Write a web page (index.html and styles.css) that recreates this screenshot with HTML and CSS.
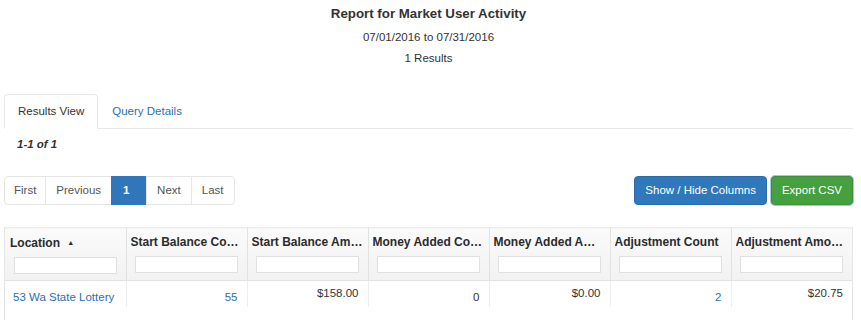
FILE: index.html
```html
<!DOCTYPE html>
<html>
<head>
    <meta name="viewport" content="width=device-width, initial-scale=1.0">
    <title>Report for Market User Activity</title>
    <link rel="stylesheet" href="styles.css">
</head>
<body>
    <div id="container">
        <div class="report-head">
            <h1>Report for Market User Activity</h1>
            <p>07/01/2016 to 07/31/2016</p>
            <p>1 Results</p>
        </div>

        <ul class="tabs">
            <li class="tab active">Results View</li>
            <li class="tab"><a href="#">Query Details</a></li>
        </ul>

        <div class="count">1-1 of 1</div>

        <div class="toolbar">
            <ul class="pager">
                <li>First</li>
                <li>Previous</li>
                <li class="current">1</li>
                <li>Next</li>
                <li>Last</li>
            </ul>
            <div class="actions">
                <button class="btn btn-blue">Show / Hide Columns</button>
                <button class="btn btn-green">Export CSV</button>
            </div>
        </div>

        <div class="grid-wrap">
            <table class="grid">
                <thead>
                    <tr>
                        <th><div class="th-label">Location <span class="sort">&#9650;</span></div><input type="text"></th>
                        <th><div class="th-label">Start Balance Count</div><input type="text"></th>
                        <th><div class="th-label">Start Balance Amount</div><input type="text"></th>
                        <th><div class="th-label">Money Added Count</div><input type="text"></th>
                        <th><div class="th-label">Money Added Amount</div><input type="text"></th>
                        <th><div class="th-label">Adjustment Count</div><input type="text"></th>
                        <th><div class="th-label">Adjustment Amount</div><input type="text"></th>
                    </tr>
                </thead>
                <tbody>
                    <tr>
                        <td><a href="#">53 Wa State Lottery</a></td>
                        <td class="num"><a href="#">55</a></td>
                        <td class="num top">$158.00</td>
                        <td class="num">0</td>
                        <td class="num top">$0.00</td>
                        <td class="num"><a href="#">2</a></td>
                        <td class="num top">$20.75</td>
                    </tr>
                </tbody>
            </table>
        </div>
    </div>
</body>
</html>
```

FILE: styles.css
```css
* {
    box-sizing: border-box;
}
body {
    margin: 0;
    font-family: "Liberation Sans", Arial, sans-serif;
    font-size: 11.5px;
    line-height: 17px;
    color: #333;
    background-color: #fff;
}
a {
    color: #2a6fb5;
    text-decoration: none;
}
#container {
    padding: 4px 8px 0 4px;
}

/* report title block */
.report-head {
    text-align: center;
}
.report-head h1 {
    margin: 0;
    font-size: 13.3px;
    line-height: 20px;
    font-weight: bold;
}
.report-head p {
    margin: 3px 0 0;
    line-height: 20px;
}
.report-head p + p {
    margin-top: 1px;
}

/* tabs */
.tabs {
    display: flex;
    margin: 26px 0 0;
    padding: 0;
    list-style: none;
    border-bottom: 1px solid #e8e8e8;
}
.tab {
    margin-bottom: -1px;
    padding: 8px 13px;
    border: 1px solid transparent;
    border-radius: 4px 4px 0 0;
}
.tab.active {
    border-color: #e8e8e8 #e8e8e8 #fff;
    background-color: #fff;
}

.count {
    padding: 7px 0 0 13px;
    font-weight: bold;
    font-style: italic;
}

/* pager + buttons */
.toolbar {
    display: flex;
    justify-content: space-between;
    align-items: center;
    margin-top: 23px;
}
.pager {
    display: flex;
    margin: 0 0 0 1px;
    padding: 0;
    list-style: none;
}
.pager li {
    padding: 5px 10px;
    line-height: 17px;
    color: #555;
    border: 1px solid #e6e6e6;
    margin-left: -1px;
}
.pager li:first-child {
    padding: 5px 9px;
    border-radius: 4px 0 0 4px;
}
.pager li:last-child {
    border-radius: 0 4px 4px 0;
}
.pager li.current {
    width: 36px;
    padding-left: 11px;
    color: #fff;
    font-weight: bold;
    background-color: #2f77ba;
    border-color: #2f77ba;
}
.actions {
    display: flex;
    gap: 4px;
}
.btn {
    padding: 4px 10px;
    font-family: inherit;
    font-size: 11.5px;
    line-height: 17px;
    color: #fff;
    border: 1px solid transparent;
    border-radius: 4px;
    cursor: pointer;
}
.btn-blue {
    background-color: #2f78bb;
    border-color: #2a6caa;
}
.btn-green {
    padding: 5px 10px;
    background-color: #45a040;
    border-color: #3c8e38;
    box-shadow: 0 0 0 1px #a9c6e6;
}

/* results grid */
.grid-wrap {
    margin-top: 22px;
    height: 100px;
    border-left: 1px solid #e6e6e6;
    border-right: 1px solid #e6e6e6;
}
.grid {
    width: 100%;
    border-collapse: collapse;
    table-layout: fixed;
}
.grid th {
    padding: 6px 5px 6px 4px;
    text-align: left;
    font-size: 12px;
    font-weight: bold;
    color: #2b2b2b;
    background: linear-gradient(#fafafa, #f2f2f2);
    border: 1px solid #e2e2e2;
    border-top-color: #ececec;
    vertical-align: top;
}
.grid th:first-child {
    border-left: none;
    padding-left: 5px;
}
.grid th:last-child {
    border-right: none;
}
.th-label {
    white-space: nowrap;
    overflow: hidden;
    text-overflow: ellipsis;
    line-height: 17px;
}
.sort {
    font-size: 7px;
    margin-left: 4px;
    vertical-align: 2px;
}
.grid th input {
    display: block;
    width: calc(100% - 8px);
    height: 17px;
    margin: 5px 4px 0;
    border: 1px solid #e0e0e0;
    background-color: #fff;
}
.grid td {
    padding: 8px 9px 0;
    height: 26px;
    white-space: nowrap;
    color: #333;
    border-left: 1px solid #eeeeee;
    vertical-align: top;
}
.grid td:first-child {
    border-left: none;
    padding-left: 8px;
    padding-right: 2px;
}
.grid td.num {
    text-align: right;
}
.grid td.top {
    padding-top: 4px;
}
```
